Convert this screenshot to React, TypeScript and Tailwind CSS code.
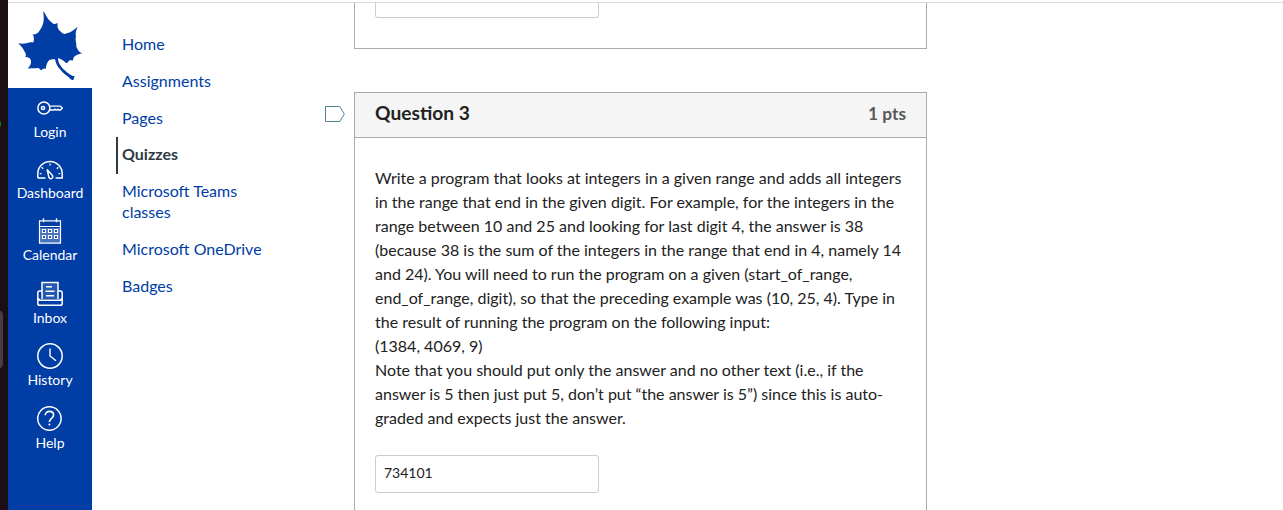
import type { ReactNode } from "react";

const Icon = ({ children }: { children: ReactNode }) => (
  <svg viewBox="0 0 26 26" className="h-[26px] w-[26px] shrink-0" fill="none" stroke="white" strokeWidth="1.5">
    {children}
  </svg>
);

const Leaf = () => (
  <svg viewBox="24 9 252 255" className="h-[85px] w-[84px] shrink-0">
    <path
      fill="#003da5"
      d="M130 34 C137 42 139 50 145 58 C150 64 156 69 162 73 C166 72 169 69 173 70 C171 83 175 90 184 97 C190 102 195 103 200 100 C212 97 222 90 233 80 C229 90 225 99 228 109 C225 119 228 125 229 133 C227 140 232 147 236 153 C239 157 242 158 246 160 C237 164 230 164 224 169 C219 173 220 179 218 182 C212 180 206 181 204 187 C200 191 198 188 194 185 C188 181 182 176 174 174 C174 185 178 192 184 200 C191 209 200 216 209 223 C214 227 219 228 224 229 C221 233 223 237 219 241 C213 240 208 234 203 229 C191 222 182 211 175 202 C170 195 167 187 165 178 C160 177 154 177 148 180 C141 186 139 195 137 207 C132 203 127 207 124 211 C119 210 119 204 114 204 C104 205 94 204 83 206 C90 199 94 191 93 183 C92 175 87 171 76 171 C79 166 78 160 74 155 C69 145 63 137 54 130 C67 132 79 131 91 127 C97 126 100 130 101 124 C103 115 101 108 98 103 C105 104 111 102 116 96 C125 84 130 74 131 61 C132 51 130 43 130 34Z"
    />
  </svg>
);

const KeyIcon = () => (
  <Icon>
    <circle cx="6.9" cy="13" r="6" />
    <circle cx="6" cy="13" r="1.6" />
    <path d="M12.6 11.1H23.3L25.2 13l-1.7 2h-1.7l-.9-.8-.9.8h-1l-1-.8-.9.8h-4.5" strokeWidth="1.4" />
  </Icon>
);

const GaugeIcon = () => (
  <Icon>
    <path d="M.8 21.9v-4.2a12.2 12.2 0 0 1 24.4 0v4.2h-6.7M.8 21.9h7.7" />
    <path d="m10.1 13.5 5.3 6a2 2 0 1 1-3.5 1.8z" strokeWidth="1.4" />
    <path d="M13 7.5v2M4.6 11.3l1.6 1.5M21.4 11.3l-1.6 1.5M2.8 17.6h1.6M23.2 17.6h-1.6" strokeWidth="1.3" />
  </Icon>
);

const CalendarIcon = () => (
  <Icon>
    <path d="M2 10h22v15H2z" fill="white" fillOpacity=".28" stroke="none" />
    <path d="M2.5 2.8h21v22.4h-21zM2.5 8.5h21" strokeWidth="1.2" />
    <path d="M6.5.3v4M19.5.3v4" strokeWidth="1.4" />
    <g fill="#003da5" strokeWidth="1.2">
      <path d="M5.5 11.5h3v3h-3zM11.5 11.5h3v3h-3zM17.5 11.5h3v3h-3zM5.5 17.5h3v3h-3zM11.5 17.5h3v3h-3zM17.5 17.5h3v3h-3z" />
    </g>
  </Icon>
);

const InboxIcon = () => (
  <Icon>
    <path d="M5 18V1.5h16V18" fill="white" fillOpacity=".15" />
    <path d="M5 10H2.4Q.8 10 .8 12v10.4Q.8 24.2 2.6 24.2h20.8q1.8 0 1.8-1.8V12q0-2-1.6-2H21" />
    <path d="M1.2 17q.5 2.3 2.4 2.3h18.8q1.9 0 2.4-2.3" />
    <path d="M9 5.8h6M8.5 10.2h9M9 14.7h8" strokeWidth="1.4" />
  </Icon>
);

const ClockIcon = () => (
  <Icon>
    <circle cx="13" cy="13" r="12.2" />
    <path d="M13 5.5V13l6 4.8" strokeWidth="1.4" />
  </Icon>
);

const HelpIcon = () => (
  <Icon>
    <circle cx="12.4" cy="12.5" r="11.7" />
    <path d="M8.3 9.3c0-5.3 8.3-5 8.3-.2 0 3.4-4.2 3.3-4.2 7" strokeWidth="1.6" />
    <circle cx="12.4" cy="18.5" r="1" fill="white" stroke="none" />
  </Icon>
);

const globalLinks = [
  { label: "Login", icon: <KeyIcon />, height: "h-[61px]" },
  { label: "Dashboard", icon: <GaugeIcon />, height: "h-[62px]" },
  { label: "Calendar", icon: <CalendarIcon />, height: "h-[63px]" },
  { label: "Inbox", icon: <InboxIcon />, height: "h-[62px]" },
  { label: "History", icon: <ClockIcon />, height: "h-[63px]" },
  { label: "Help", icon: <HelpIcon />, height: "h-[62px]" },
];

const courseLinks = ["Home", "Assignments", "Pages", "Quizzes", "Microsoft Teams classes", "Microsoft OneDrive", "Badges"];

export default function App() {
  return (
    <div className="flex h-[510px] w-full overflow-hidden bg-white font-['Lato',sans-serif] text-base text-[#2d3b45]">
      <div className="relative w-2 shrink-0 overflow-hidden bg-[#1b0e14]">
        <span className="absolute top-[120px] -left-[7px] h-2 w-2 rounded-full bg-[#128a20]" />
        <span className="absolute top-[310px] -left-2 h-[59px] w-[11px] rounded-[5px] bg-[#463c41]" />
      </div>
      <div className="flex min-w-0 flex-1 flex-col pt-0.5">
        <div className="h-px shrink-0 bg-[#d9d9d9]" />
        <div className="flex min-h-0 flex-1">
          <nav className="flex w-[84px] shrink-0 flex-col bg-[#003da5]">
            <div className="h-[85px] shrink-0 bg-white">
              <Leaf />
            </div>
            <div className="flex flex-col pt-[7px]">
              {globalLinks.map(({ label, icon, height }) => (
                <a key={label} className={`flex flex-col items-center text-white ${height}`}>
                  {icon}
                  <span className="mt-px text-sm leading-5">{label}</span>
                </a>
              ))}
            </div>
          </nav>
          <nav className="flex w-[230px] shrink-0 flex-col pt-[23px] pl-6">
            {courseLinks.map((label) => (
              <a
                key={label}
                className={
                  label === "Quizzes"
                    ? "mt-[0.8px] -mb-[0.8px] w-[160px] border-l-2 border-[#2d3b45] pt-[7.1px] pb-[8.9px] pl-1 leading-[20.8px] font-bold"
                    : "w-[160px] border-l-2 border-transparent py-2 pl-1 leading-[20.8px] text-[#003da5]"
                }
              >
                {label}
              </a>
            ))}
          </nav>
          <main className="flex w-[605px] shrink-0 flex-col">
            <div className="ml-8 h-[46px] shrink-0 border-x border-b border-[#aaa] pl-5">
              <div className="h-[15px] w-[224px] rounded-b-[3px] border-x border-b border-[#c7cdd1]" />
            </div>
            <div className="mt-[43px] flex">
              <div className="w-8 shrink-0 pt-3.5 pl-[3px]">
                <svg viewBox="0 0 20 17" className="h-[17px] w-5" fill="none" stroke="#538099">
                  <path d="M.5.5h14.3l4.5 7.5-4.5 7.5H.5z" />
                </svg>
              </div>
              <section className="h-[440px] w-[573px] border border-[#aaa]">
                <header className="flex h-[45px] items-center justify-between border-b border-[#aaa] bg-[#f5f5f5] px-5 pb-1 font-bold">
                  <h2 className="text-[19.2px] leading-6 text-[#222]">Question 3</h2>
                  <span className="pt-0.5 text-[17.3px] leading-6 text-[#595959]">1 pts</span>
                </header>
                <div className="px-5 pt-7 leading-6 whitespace-nowrap text-[#222]">
                  <p>
                    Write a program that looks at integers in a given range and adds all integers<br />
                    in the range that end in the given digit. For example, for the integers in the<br />
                    range between 10 and 25 and looking for last digit 4, the answer is 38<br />
                    (because 38 is the sum of the integers in the range that end in 4, namely 14<br />
                    and 24). You will need to run the program on a given (start_of_range,<br />
                    end_of_range, digit), so that the preceding example was (10, 25, 4). Type in<br />
                    the result of running the program on the following input:
                  </p>
                  <p>(1384, 4069, 9)</p>
                  <p>
                    Note that you should put only the answer and no other text (i.e., if the<br />
                    answer is 5 then just put 5, don’t put “the answer is 5”) since this is auto-<br />
                    graded and expects just the answer.
                  </p>
                  <input
                    type="text"
                    defaultValue="734101"
                    className="mt-[25px] block h-[38px] w-[224px] rounded-[3px] border border-[#c7cdd1] px-2 pb-1 text-sm outline-none"
                  />
                </div>
              </section>
            </div>
          </main>
        </div>
      </div>
    </div>
  );
}
